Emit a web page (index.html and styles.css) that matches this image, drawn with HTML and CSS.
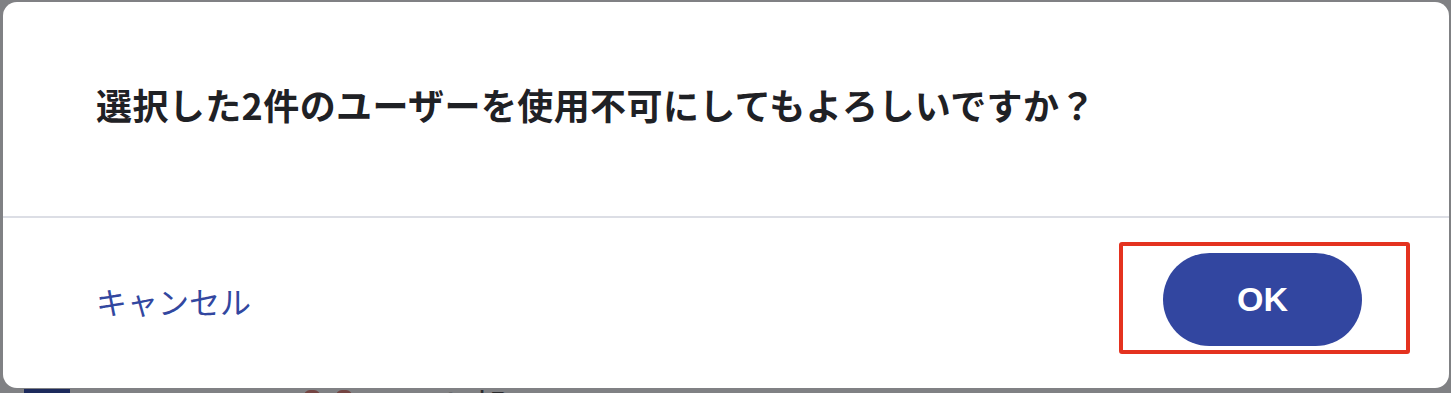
FILE: index.html
```html
<!DOCTYPE html>
<html lang="ja">
<head>
<meta charset="utf-8">
<title>確認</title>
<link rel="stylesheet" href="styles.css">
</head>
<body>
<div class="dialog">
  <div class="dialog-body">
    <p class="message">選択した2件のユーザーを使用不可にしてもよろしいですか？</p>
  </div>
  <div class="dialog-footer">
    <button class="btn-cancel" type="button">キャンセル</button>
    <span class="highlight">
      <button class="btn-ok" type="button">OK</button>
    </span>
  </div>
</div>
<div class="backdrop-row">
  <span class="avatar"></span>
  <span class="code">DUSYB111</span>
  <span class="tag"></span>
  <span class="tag"></span>
  <span class="dept">テスト部</span>
</div>
</body>
</html>
```

FILE: styles.css
```css
html, body {
  margin: 0;
  padding: 0;
}
body {
  background: #808184;
  width: 1451px;
  height: 393px;
  overflow: hidden;
  font-family: "Noto Sans CJK JP", "Noto Sans", "Liberation Sans", sans-serif;
}
.dialog {
  margin: 2px 2px 0 3px;
  height: 386px;
  background: #ffffff;
  border-radius: 14px;
  display: flex;
  flex-direction: column;
  box-sizing: border-box;
}
.dialog-body {
  height: 216px;
  box-sizing: border-box;
  padding: 75px 0 0 93px;
  border-bottom: 2px solid #dcdee5;
}
.message {
  margin: 0;
  font-size: 36px;
  line-height: 54px;
  font-weight: 700;
  color: #1f2125;
  letter-spacing: 0.4px;
}
.dialog-footer {
  flex: 1;
  display: flex;
  align-items: flex-start;
  justify-content: space-between;
  padding: 24px 39px 0 93px;
}
.btn-cancel {
  margin-top: 34px;
  background: none;
  border: none;
  padding: 0;
  font-family: inherit;
  font-size: 31px;
  line-height: 50px;
  color: #3247a0;
  cursor: pointer;
}
.highlight {
  display: block;
  border: 4px solid #e4321f;
  border-radius: 3px;
  padding: 7px 44px 4px 40px;
}
.btn-ok {
  display: block;
  width: 199px;
  height: 93px;
  border: none;
  border-radius: 47px;
  background: #3246a0;
  color: #ffffff;
  font-family: "Liberation Sans", "Noto Sans", sans-serif;
  font-weight: 700;
  font-size: 34px;
  cursor: pointer;
}
.backdrop-row {
  display: flex;
  align-items: flex-start;
  height: 5px;
  overflow: hidden;
  padding-left: 24px;
}
.avatar {
  width: 46px;
  height: 30px;
  margin-top: 1px;
  background: #1d2a5c;
}
.code {
  margin-left: 33px;
  font-family: "Liberation Sans", sans-serif;
  font-size: 34px;
  line-height: 1;
  margin-top: 2px;
  color: #2a2b2e;
  letter-spacing: 2px;
}
.tag {
  width: 16px;
  height: 20px;
  margin-top: 2px;
  background: #744543;
  border-radius: 6px 6px 0 0;
  margin-left: 16px;
}
.tag:first-of-type {
  margin-left: 30px;
}
.dept {
  margin-left: 18px;
  font-size: 34px;
  line-height: 1;
  margin-top: 0;
  color: #2a2b2e;
}
```
